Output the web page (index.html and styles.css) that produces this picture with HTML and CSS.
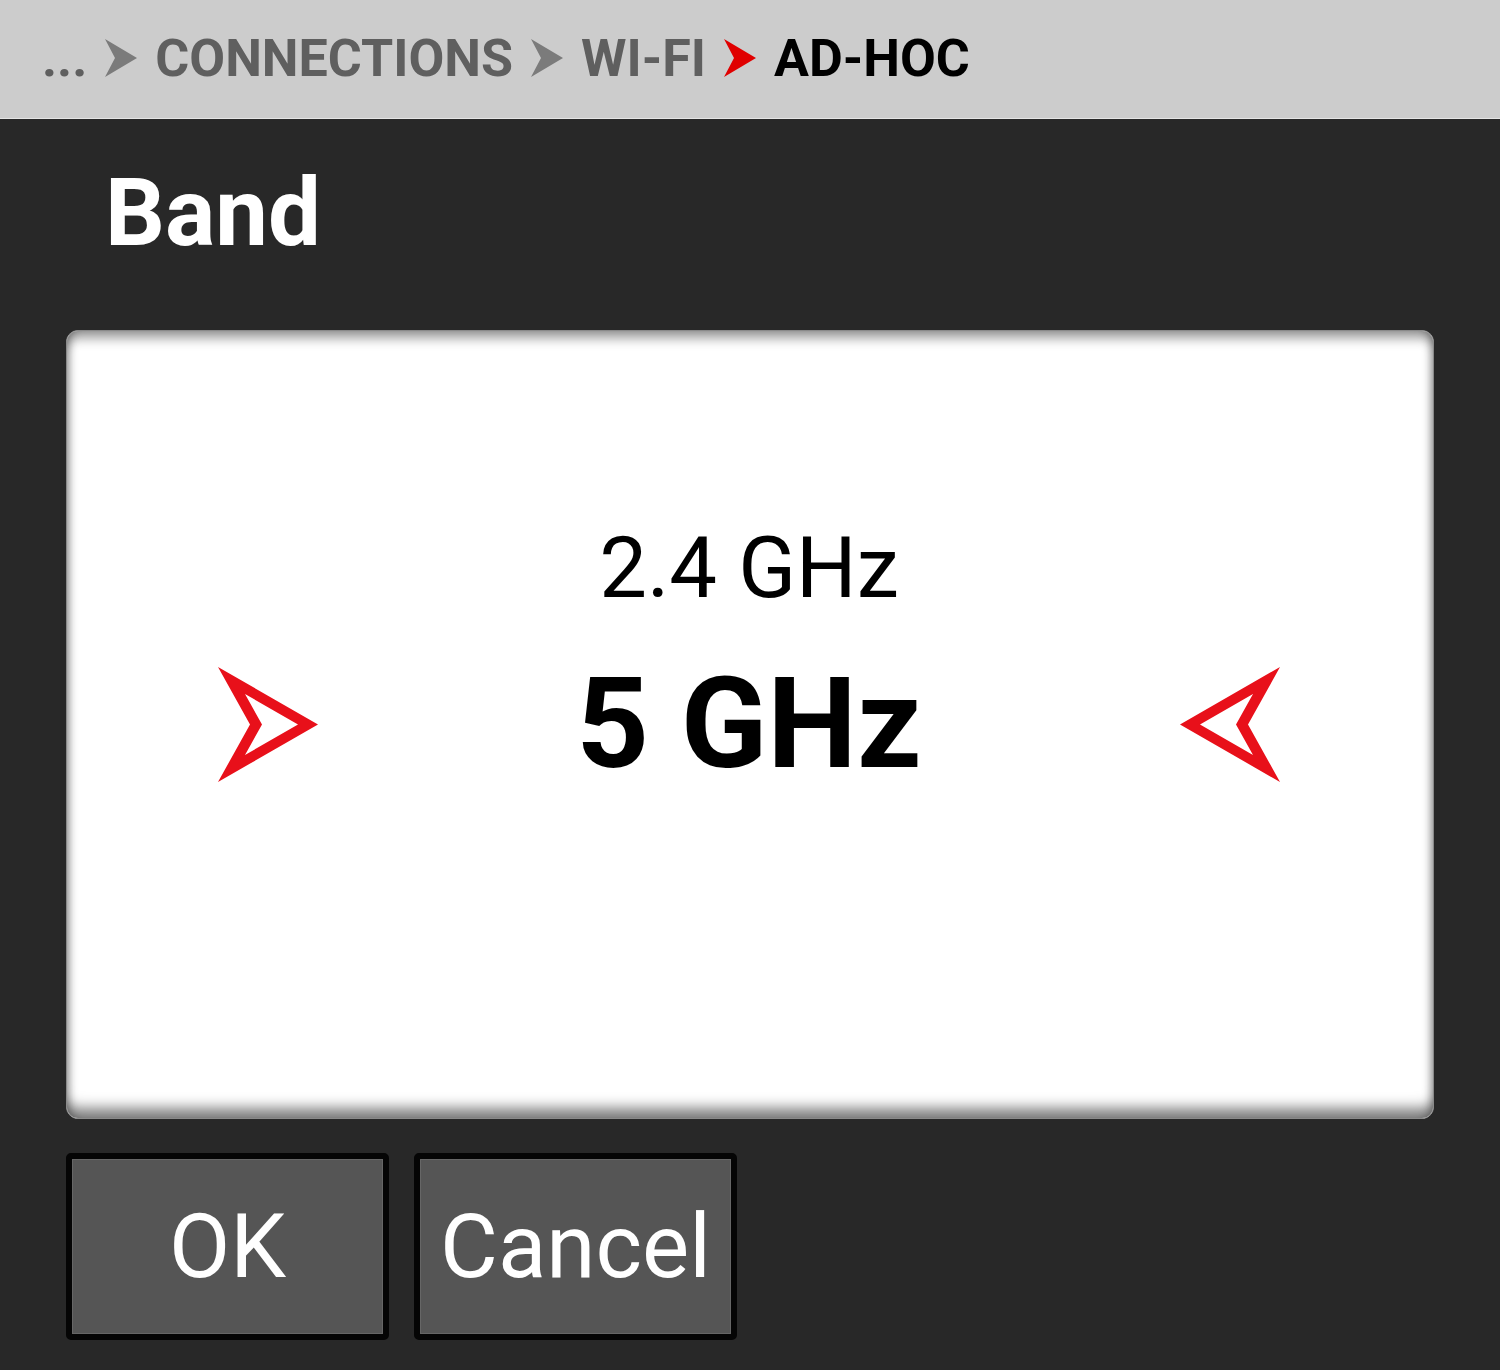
FILE: index.html
```html
<!DOCTYPE html>
<html>
<head>
<meta charset="utf-8">
<link rel="stylesheet" href="styles.css">
</head>
<body>
<header class="crumbs">
  <span class="crumb dots">...</span>
  <svg class="chev" viewBox="0 0 32 38"><path d="M0 0 L32 19 L0 38 L10 19 Z" fill="#7b7b7b"/></svg>
  <span class="crumb">CONNECTIONS</span>
  <svg class="chev" viewBox="0 0 32 38"><path d="M0 0 L32 19 L0 38 L10 19 Z" fill="#7b7b7b"/></svg>
  <span class="crumb">WI-FI</span>
  <svg class="chev" viewBox="0 0 32 38"><path d="M0 0 L32 19 L0 38 L10 19 Z" fill="#e00000"/></svg>
  <span class="crumb current">AD-HOC</span>
</header>

<h1 class="title">Band</h1>

<section class="panel">
  <svg class="arrow" viewBox="0 0 100 115"><path fill-rule="evenodd" fill="#e8101a" d="M0 0 L100 57.5 L0 115 L32 57.5 Z M27 27 L44 57.5 L27 88 L80 57.5 Z"/></svg>
  <div class="options">
    <div class="opt">2.4 GHz</div>
    <div class="opt selected">5 GHz</div>
  </div>
  <svg class="arrow" viewBox="0 0 100 115"><path fill-rule="evenodd" fill="#e8101a" d="M100 0 L0 57.5 L100 115 L68 57.5 Z M73 27 L56 57.5 L73 88 L20 57.5 Z"/></svg>
</section>

<div class="buttons">
  <button class="btn">OK</button>
  <button class="btn">Cancel</button>
</div>
</body>
</html>
```

FILE: styles.css
```css
html, body {
  margin: 0;
  padding: 0;
}
body {
  width: 1500px;
  height: 1370px;
  background: #282828;
  font-family: Roboto, "Liberation Sans", sans-serif;
  overflow: hidden;
}
.crumbs {
  height: 119px;
  box-sizing: border-box;
  background: #cccccc;
  border-bottom: 1px solid #e4e4e4;
  display: flex;
  align-items: center;
  gap: 18px;
  padding-left: 42px;
}
.crumb {
  font-size: 52px;
  font-weight: 700;
  color: #5f5f5f;
  line-height: 1;
}
.crumb.current {
  color: #000;
}
.dots {
  margin-right: 0;
}
.chev {
  width: 32px;
  height: 38px;
  flex: none;
  margin-top: -2px;
}
.title {
  margin: 46px 0 0 0;
  padding-left: 105px;
  font-size: 94px;
  line-height: 96px;
  font-weight: 700;
  color: #fff;
  height: 96px;
}
.panel {
  margin: 69px 66px 0 66px;
  height: 789px;
  box-sizing: border-box;
  background: #fff;
  border-radius: 12px;
  border: 1px solid #8a8a8a;
  box-shadow:
    inset 0 12px 12px -5px rgba(0,0,0,0.4),
    inset 0 -16px 14px -6px rgba(0,0,0,0.5),
    inset 8px 0 10px -6px rgba(0,0,0,0.3),
    inset -8px 0 10px -6px rgba(0,0,0,0.3);
  display: flex;
  justify-content: space-between;
  align-items: flex-start;
  padding: 0 153px 0 151px;
}
.arrow {
  width: 100px;
  height: 115px;
  align-self: center;
  flex: none;
}
.options {
  margin-top: 195px;
  display: flex;
  flex-direction: column;
  align-items: center;
  gap: 49px;
  color: #000;
}
.opt {
  font-size: 85px;
  line-height: 85px;
  font-weight: 400;
}
.opt.selected {
  font-size: 127px;
  line-height: 127px;
  font-weight: 700;
}
.buttons {
  display: flex;
  gap: 25px;
  margin: 34px 0 0 66px;
}
.btn {
  width: 323px;
  height: 187px;
  box-sizing: border-box;
  background: #555555;
  border: 6px solid #050505;
  border-radius: 5px;
  box-shadow: inset 0 0 0 1px #666;
  color: #fff;
  font-family: Roboto, "Liberation Sans", sans-serif;
  font-size: 89px;
  font-weight: 400;
  padding: 0;
  display: flex;
  align-items: center;
  justify-content: center;
}
```
